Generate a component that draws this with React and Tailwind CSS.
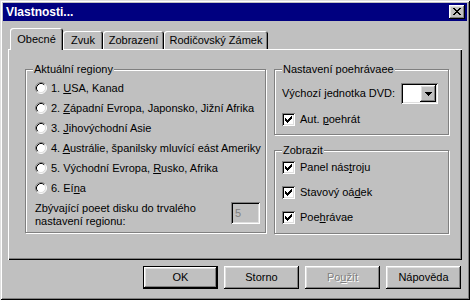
import React from 'react';

const raised = 'shadow-[inset_-1px_-1px_0_#000,inset_1px_1px_0_#fff,inset_-2px_-2px_0_#808080,inset_2px_2px_0_#dfdfdf]';
const sunken = 'shadow-[inset_1px_1px_0_#808080,inset_-1px_-1px_0_#fff,inset_2px_2px_0_#000,inset_-2px_-2px_0_#dfdfdf]';
const etched = 'border border-[#808080] shadow-[1px_1px_0_#fff,inset_1px_1px_0_#fff]';

function Radio() {
    return (
        <svg width="12" height="12" viewBox="0 0 12 12" className="shrink-0">
            <circle cx="6" cy="6" r="5" fill="#fff" />
            <path d="M2.11 9.89A5.5 5.5 0 0 1 9.89 2.11" stroke="#808080" fill="none" />
            <path d="M9.89 2.11A5.5 5.5 0 0 1 2.11 9.89" stroke="#fff" fill="none" />
            <path d="M2.82 9.18A4.5 4.5 0 0 1 9.18 2.82" stroke="#000" fill="none" />
            <path d="M9.18 2.82A4.5 4.5 0 0 1 2.82 9.18" stroke="#dfdfdf" fill="none" />
        </svg>
    );
}

function Check() {
    return (
        <div className={`w-[13px] h-[13px] bg-white shrink-0 relative ${sunken}`}>
            <svg width="7" height="7" viewBox="0 0 7 7" shapeRendering="crispEdges" className="absolute left-[3px] top-[3px]">
                <path d="M0 2h1v3h-1zM1 3h1v3h-1zM2 4h1v3h-1zM3 3h1v3h-1zM4 2h1v3h-1zM5 1h1v3h-1zM6 0h1v3h-1z" fill="#000" />
            </svg>
        </div>
    );
}

function Group({ label, className, children }) {
    return (
        <div className={`relative ${etched} ${className}`}>
            <span className="absolute -top-[7px] left-[7px] px-[1px] bg-[#c0c0c0] leading-[13px] whitespace-nowrap">{label}</span>
            {children}
        </div>
    );
}

function Tab({ active, w, children }) {
    if (active) {
        return (
            <div className={`relative z-10 h-[22px] -mb-[1px] flex items-center justify-center bg-[#c0c0c0] rounded-t-[3px] shadow-[inset_1px_1px_0_#fff,inset_-1px_0_0_#000,inset_-2px_0_0_#808080] ${w}`}>
                {children}
            </div>
        );
    }
    return (
        <div className={`h-[18px] flex items-center justify-center pt-[1px] rounded-t-[3px] shadow-[inset_1px_1px_0_#fff,inset_-1px_0_0_#000,inset_-2px_0_0_#808080] ${w}`}>
            {children}
        </div>
    );
}

function Button({ children, def, disabled }) {
    return (
        <div className={`w-[75px] h-[23px] ${def ? 'border border-black' : ''}`}>
            <div className={`w-full h-full flex items-center justify-center ${raised} ${disabled ? 'text-[#808080] [text-shadow:1px_1px_0_#fff]' : ''}`}>
                {children}
            </div>
        </div>
    );
}

const regions = [
    <>1. <u>U</u>SA, Kanad</>,
    <>2. <u>Z</u>ápadní Evropa, Japonsko, Jižní Afrika</>,
    <>3. <u>J</u>ihovýchodní Asie</>,
    <>4. <u>A</u>ustrálie, španilsky mluvící eást Ameriky</>,
    <>5. Východní Evropa, <u>R</u>usko, Afrika</>,
    <>6. Eí<u>n</u>a</>,
];

export default function App() {
    return (
        <div className="w-[470px] h-[300px] bg-[#c0c0c0] p-[3px] flex flex-col text-[11px] text-black leading-none font-['Liberation_Sans',Arial,sans-serif] shadow-[inset_1px_1px_0_#dfdfdf,inset_-1px_-1px_0_#000,inset_2px_2px_0_#fff,inset_-2px_-2px_0_#808080]">
            <header className="h-[18px] bg-[#000080] flex items-center justify-between pl-[3px] pr-[2px]">
                <span className="text-white font-bold text-[12px]">Vlastnosti...</span>
                <div className={`w-[16px] h-[14px] bg-[#c0c0c0] flex items-center justify-center ${raised}`}>
                    <svg width="8" height="7" viewBox="0 0 8 7" shapeRendering="crispEdges" className="-mt-[1px] -ml-[1px]">
                        <path d="M0 0h2v1h-2zM6 0h2v1h-2zM1 1h2v1h-2zM5 1h2v1h-2zM2 2h4v1h-4zM3 3h2v1h-2zM2 4h4v1h-4zM1 5h2v1h-2zM5 5h2v1h-2zM0 6h2v1h-2zM6 6h2v1h-2z" fill="#000" />
                    </svg>
                </div>
            </header>

            <div className="ml-[7px] mt-[7px] h-[21px] flex items-end">
                <Tab active w="w-[53px]">Obecné</Tab>
                <Tab w="w-[40px]">Zvuk</Tab>
                <Tab w="w-[61px]">Zobrazení</Tab>
                <Tab w="w-[104px]">Rodičovský Zámek</Tab>
            </div>

            <div className="ml-[5px] w-[454px] h-[211px] flex pl-[17px] pt-[20px] shadow-[inset_1px_1px_0_#fff,inset_-1px_-1px_0_#000,inset_-2px_-2px_0_#808080]">
                <Group label="Aktuální regiony" className="w-[241px] h-[164px] pt-[8px] pl-[9px] pr-[5px]">
                    {regions.map((r, i) => (
                        <div key={i} className="h-[20px] flex items-center gap-[4px] whitespace-nowrap">
                            <Radio />
                            <span>{r}</span>
                        </div>
                    ))}
                    <div className="flex items-start mt-[4px]">
                        <div className="leading-[13px] whitespace-nowrap">
                            Zbývající poeet disku do trvalého<br />nastavení regionu:
                        </div>
                        <div className={`ml-auto w-[29px] h-[22px] flex items-center pl-[4px] text-[#808080] ${sunken}`}>5</div>
                    </div>
                </Group>

                <div className="ml-[8px] flex flex-col gap-[15px]">
                    <Group label="Nastavení poehrávaee" className="w-[175px] h-[66px] pt-[13px] pl-[7px] pr-[10px]">
                        <div className="h-[21px] flex items-center whitespace-nowrap">
                            <span>Výchozí jednotka DVD:</span>
                            <div className={`ml-auto w-[37px] h-[21px] bg-white p-[2px] flex justify-end ${sunken}`}>
                                <div className={`w-[16px] h-[17px] bg-[#c0c0c0] flex items-center justify-center ${raised}`}>
                                    <svg width="7" height="4" viewBox="0 0 7 4" shapeRendering="crispEdges">
                                        <path d="M0 0h7v1h-7zM1 1h5v1h-5zM2 2h3v1h-3zM3 3h1v1h-1z" fill="#000" />
                                    </svg>
                                </div>
                            </div>
                        </div>
                        <div className="mt-[9px] flex items-center gap-[5px]">
                            <Check />
                            <span>Aut. <u>p</u>oehrát</span>
                        </div>
                    </Group>

                    <Group label="Zobrazit" className="w-[175px] h-[84px] pt-[4px] pl-[7px]">
                        <div className="h-[25px] flex items-center gap-[5px]">
                            <Check />
                            <span>Panel nás<u>t</u>roju</span>
                        </div>
                        <div className="h-[25px] flex items-center gap-[5px]">
                            <Check />
                            <span>Stavový oá<u>d</u>ek</span>
                        </div>
                        <div className="h-[25px] flex items-center gap-[5px]">
                            <Check />
                            <span>Poe<u>h</u>rávae</span>
                        </div>
                    </Group>
                </div>
            </div>

            <div className="flex justify-end gap-[6px] mt-[6px] pr-[6px]">
                <Button def>OK</Button>
                <Button>Storno</Button>
                <Button disabled>Po<u>u</u>žít</Button>
                <Button>Nápověda</Button>
            </div>
        </div>
    );
}
